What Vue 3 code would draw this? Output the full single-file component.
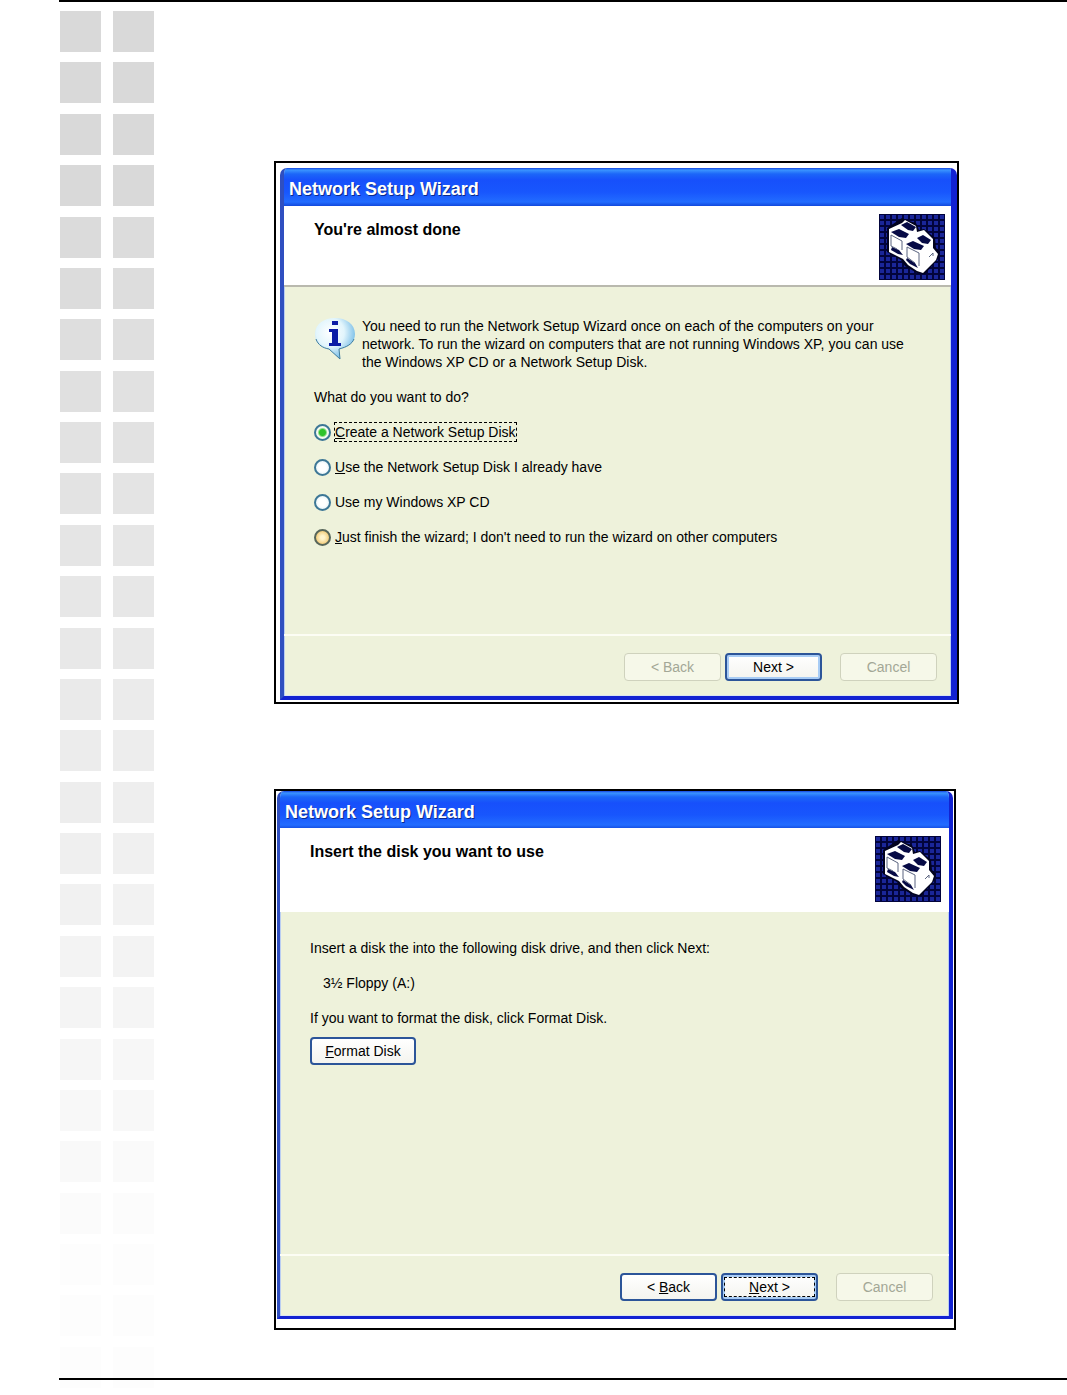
<script setup>
import { ref } from 'vue'

const rows = 27
const choice = ref('create')

function shade(row) {
  const level = row < 5 ? 217 : Math.min(253, 217 + Math.round((row - 4) * 1.7))
  return `rgb(${level}, ${level}, ${level})`
}

const darkPanels = [
  'M22 11l6-3 9 5-3 4-5-1z',
  'M12 18l8-3 10 5-3 4-7-1z',
  'M38 24l6-3 8 5-3 4-6-1z',
  'M27 30l7-3 11 5-3 4-7-1z',
  'M13 33l7 3 4 5-5-1-7-4z',
  'M28 44l8 5 3 5-8-4-4-4z',
]
</script>

<template>
  <div class="page">
    <div class="sheet">
      <aside class="squares" aria-hidden="true">
        <div v-for="row in rows" :key="row" class="pair">
          <span class="square" :style="{ background: shade(row) }"></span>
          <span class="square" :style="{ background: shade(row + 0.5) }"></span>
        </div>
      </aside>

      <main class="figures">
        <figure class="figure first">
          <section class="window">
            <h2 class="titlebar">Network Setup Wizard</h2>
            <header class="heading">
              <h3>You're almost done</h3>
              <svg class="logo" viewBox="0 0 66 66" aria-hidden="true">
                <defs>
                  <pattern id="mesh" width="6" height="6" patternUnits="userSpaceOnUse">
                    <rect width="6" height="6" fill="#02043c" />
                    <rect x="1" y="1" width="4" height="4" fill="#1a2699" />
                  </pattern>
                </defs>
                <rect width="66" height="66" fill="url(#mesh)" />
                <path d="M8 14l15-10 4 2 10 3 3 7 5-1 11 9 1 10 4 4-2 7-13 15-8-1-12-7-4-6-14-8z" fill="#02031f" />
                <path d="M10 15l13-6 3-3 11 6 1 6 7-2 9 9v9l5 6-2 6-13 13-6-2-9-6-5-6-14-7z" fill="#fff" />
                <path v-for="d in darkPanels" :key="d" :d="d" fill="#060a45" />
                <path d="M12 21l11 6v9M12 21v11l6 3M28 33l12 6v13M28 33v10l8 6M50 43l4-4v3" fill="none" stroke="#5b6580" />
              </svg>
            </header>
            <div class="content">
              <div class="notice">
                <svg class="info" viewBox="0 0 42 44" aria-hidden="true">
                  <defs>
                    <radialGradient id="bubble" cx="38%" cy="35%" r="70%">
                      <stop offset="0" stop-color="#fff" />
                      <stop offset="0.5" stop-color="#e2f5fc" />
                      <stop offset="1" stop-color="#68b5e4" />
                    </radialGradient>
                  </defs>
                  <path d="M21 1C10 1 1 7 1 17c0 9 6 14 14 15l11 10-1-10c10-2 16-7 16-15C41 7 32 1 21 1z" fill="url(#bubble)" />
                  <path d="M2 22c2 6 7 9 13 10l11 10-1-10c8-2 13-5 15-10" fill="none" stroke="#3e7c9e" />
                  <path d="M18 4h6v4h-6zM15 12h9v14h3v3H15v-3h3V15h-3z" fill="#0b1ca6" />
                </svg>
                <p>
                  You need to run the Network Setup Wizard once on each of the computers on your<br />
                  network. To run the wizard on computers that are not running Windows XP, you can use<br />
                  the Windows XP CD or a Network Setup Disk.
                </p>
              </div>
              <fieldset class="choices">
                <legend>What do you want to do?</legend>
                <label class="choice">
                  <input v-model="choice" type="radio" name="task" value="create" />
                  <span class="focused"><u>C</u>reate a Network Setup Disk</span>
                </label>
                <label class="choice">
                  <input v-model="choice" type="radio" name="task" value="have" />
                  <span><u>U</u>se the Network Setup Disk I already have</span>
                </label>
                <label class="choice">
                  <input v-model="choice" type="radio" name="task" value="cd" />
                  <span>Use my Windows XP CD</span>
                </label>
                <label class="choice">
                  <input v-model="choice" class="hot" type="radio" name="task" value="finish" />
                  <span><u>J</u>ust finish the wizard; I don't need to run the wizard on other computers</span>
                </label>
              </fieldset>
            </div>
            <footer class="actions">
              <button type="button" disabled>&lt; Back</button>
              <button type="button" class="default">Next &gt;</button>
              <button type="button" class="cancel" disabled>Cancel</button>
            </footer>
          </section>
        </figure>

        <figure class="figure second">
          <section class="window">
            <h2 class="titlebar">Network Setup Wizard</h2>
            <header class="heading">
              <h3>Insert the disk you want to use</h3>
              <svg class="logo" viewBox="0 0 66 66" aria-hidden="true">
                <rect width="66" height="66" fill="url(#mesh)" />
                <path d="M8 14l15-10 4 2 10 3 3 7 5-1 11 9 1 10 4 4-2 7-13 15-8-1-12-7-4-6-14-8z" fill="#02031f" />
                <path d="M10 15l13-6 3-3 11 6 1 6 7-2 9 9v9l5 6-2 6-13 13-6-2-9-6-5-6-14-7z" fill="#fff" />
                <path v-for="d in darkPanels" :key="d" :d="d" fill="#060a45" />
                <path d="M12 21l11 6v9M12 21v11l6 3M28 33l12 6v13M28 33v10l8 6M50 43l4-4v3" fill="none" stroke="#5b6580" />
              </svg>
            </header>
            <div class="content">
              <p>Insert a disk the into the following disk drive, and then click Next:</p>
              <p class="drive">3½ Floppy (A:)</p>
              <p>If you want to format the disk, click Format Disk.</p>
              <button type="button" class="format"><u>F</u>ormat Disk</button>
            </div>
            <footer class="actions">
              <button type="button">&lt; <u>B</u>ack</button>
              <button type="button" class="default focus"><span><u>N</u>ext &gt;</span></button>
              <button type="button" class="cancel" disabled>Cancel</button>
            </footer>
          </section>
        </figure>
      </main>
    </div>
  </div>
</template>

<style>
body {
  margin: 0;
  background: #fff;
}
</style>

<style scoped>
* {
  box-sizing: border-box;
}

.page {
  display: flex;
  min-height: 100vh;
  padding: 0 0 15px 59px;
  overflow: hidden;
  color: #000;
  font: 14px/18px "Liberation Sans", Arial, sans-serif;
}

.sheet {
  display: flex;
  flex: 1;
  border-top: 2px solid #000;
  border-bottom: 2px solid #000;
}

.squares {
  position: relative;
  z-index: -1;
  display: flex;
  flex-direction: column;
  justify-content: space-between;
  flex: none;
  margin-bottom: -10px;
  padding: 9px 0 0 1px;
}

.pair {
  display: flex;
  gap: 12px;
}

.square {
  width: 41px;
  height: 41px;
}

.figures {
  display: flex;
  flex: 1;
  flex-direction: column;
  gap: 85px;
  padding: 159px 108px 48px 120px;
}

.figure {
  margin: 0;
  border: 2px solid #000;
}

.first {
  padding: 5px 0 2px 4px;
}

.second {
  margin-right: 3px;
  padding: 0 1px 9px 1px;
}

.window {
  display: flex;
  flex-direction: column;
  border: solid #1222d2;
  border-width: 0 6px 4px 4px;
  border-left-color: #2f4fc0;
  border-radius: 7px 7px 0 0;
  background: #eef2db;
  box-shadow: inset 1px 0 #b9cdf2, inset -1px 0 #b9cdf2, inset 0 -1px #dbe4f0;
  overflow: hidden;
}

.second .window {
  border-width: 0 4px 3px 3px;
}

h2,
h3,
p {
  margin: 0;
}

.titlebar {
  height: 38px;
  margin: 0 -6px 0 -4px;
  padding: 11px 9px 0;
  background: linear-gradient(#1644e0 0, #3a94ff 2px, #1c66f8 6px, #1750fb 12px, #1856fd 24px, #226cff 34px, #1248dc 38px);
  color: #fff;
  font-size: 18px;
  line-height: 20px;
  text-shadow: 1px 1px #0a2a8c;
}

.second .titlebar {
  height: 37px;
  margin: 0 -4px 0 -3px;
  padding-left: 8px;
}

.heading {
  display: flex;
  justify-content: space-between;
  height: 81px;
  padding: 8px 6px 0 30px;
  border-bottom: 2px solid #b9b9ae;
  background: #fff;
}

.second .heading {
  height: 84px;
  padding-right: 8px;
  border-bottom: 0;
}

h3 {
  padding-top: 6px;
  font-size: 16px;
  line-height: 20px;
}

.logo {
  width: 66px;
  height: 66px;
}

.content {
  height: 347px;
  padding: 30px 20px 0 30px;
}

.second .content {
  height: 342px;
  padding-top: 27px;
}

.notice {
  display: flex;
  gap: 6px;
  white-space: nowrap;
}

.info {
  flex: none;
  width: 42px;
  height: 44px;
}

.choices {
  margin: 0;
  padding: 0;
  border: 0;
}

.notice + .choices {
  margin-top: 17px;
}

legend {
  padding: 0;
}

.choice {
  display: flex;
  align-items: center;
  gap: 4px;
  height: 18px;
  margin-top: 17px;
}

.choice input {
  width: 17px;
  height: 17px;
  margin: 0;
  border: 2px solid #3d7796;
  border-radius: 50%;
  appearance: none;
  background: radial-gradient(#fff 40%, #d8eef4);
}

.choice input:checked {
  background: radial-gradient(#2fc32b 3px, #f4faf0 5px);
}

.choice .hot {
  border-color: #57665a;
  background: radial-gradient(#fff4cd 20%, #edb950);
}

.focused {
  outline: 1px dashed #000;
}

.actions {
  display: flex;
  justify-content: flex-end;
  gap: 4px;
  height: 62px;
  padding: 17px 14px 0 0;
  border-top: 2px solid #fcfdf4;
}

.second .actions {
  padding-right: 16px;
}

button {
  width: 97px;
  height: 28px;
  padding: 0;
  border: 2px solid #2c5599;
  border-radius: 4px;
  background: linear-gradient(#fff, #f4f4ef);
  color: #000;
  font: inherit;
}

button:disabled {
  border: 1px solid #cfd2bd;
  background: #f6f8e9;
  color: #a3a796;
}

.default {
  box-shadow: inset 0 0 0 2px #a8ccf5;
}

.focus {
  padding: 1px;
}

.focus span {
  display: block;
  border: 1px dashed #000;
}

.cancel {
  margin-left: 14px;
}

.content p + p {
  margin-top: 17px;
}

.content .drive {
  padding-left: 13px;
}

.format {
  display: block;
  width: 106px;
  margin-top: 10px;
}
</style>
